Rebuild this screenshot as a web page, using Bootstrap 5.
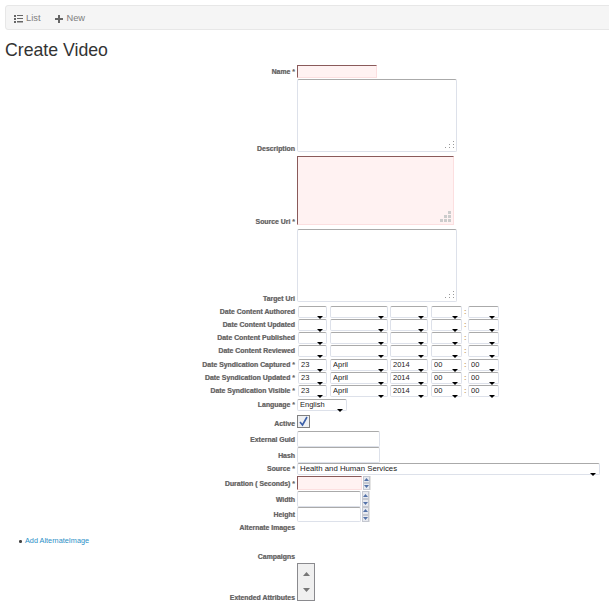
<!DOCTYPE html>
<html lang="en">
<head>
    <meta charset="UTF-8">
    <meta content="width=device-width, initial-scale=1.0" name="viewport">
    <title>Create Video</title>
    <link href="https://cdn.jsdelivr.net/npm/bootstrap@5.3.2/dist/css/bootstrap.min.css" rel="stylesheet">
    <style>
        body {
            font-family: "Liberation Sans", Arial, sans-serif;
            font-size: 8px;
            color: #333;
            padding: 5px 0 0 5px;
            overflow: hidden;
        }

        .top-bar {
            height: 25px;
            margin-right: -4px;
            padding: 2px 0 0 8px;
            gap: 15px;
            background-color: #f5f5f5;
            border: 1px solid #e7e7e7;
            border-radius: 3px;
            font-size: 9.3px;
        }

        .top-bar a {
            color: #808080;
            text-decoration: none;
            gap: 3px;
        }

        .page-title {
            font-size: 17.7px;
            font-weight: 400;
            line-height: 20px;
            margin: 10px 0 5px;
            color: #333;
        }

        /* labels sit on the left, right aligned to x=295 */
        .form-line {
            display: flex;
            align-items: flex-start;
            margin-left: -5px;
        }

        .line-label {
            width: 295px;
            flex: none;
            text-align: right;
            font-weight: 700;
            font-size: 6.9px;
            line-height: 12px;
            color: #666;
            margin: 0;
            text-shadow: 0.4px 0 rgba(190, 130, 60, 0.45), -0.4px 0 rgba(60, 120, 200, 0.45);
        }

        .line-field {
            margin-left: 2px;
            display: flex;
            align-items: flex-start;
            position: relative;
        }

        .at-end { align-items: flex-end; }
        .at-end .line-label { line-height: 6px; }
        .at-mid { align-items: center; }
        .at-mid .line-label { line-height: 9px; }

        .gap-after { margin-top: 4px; }
        .gap-little { margin-top: 1px; }

        .inp {
            display: block;
            padding: 0 3px;
            font-size: 7.5px;
            border: 1px solid #dde1ea;
            border-top-color: #aaa;
            border-radius: 2px;
            background: #fff;
            outline: 0;
        }

        .inp.bad {
            background: #fff2f2;
            border-color: #fcdfe0;
            border-top-color: #8a5a5a;
            border-left-color: #8a5a5a;
            border-radius: 0;
        }

        textarea.inp { resize: none; }

        .size-name { width: 80px; height: 13px; }
        .size-desc { width: 160px; height: 73px; }
        .size-uri { width: 157px; height: 69px; }
        .size-text { width: 83px; height: 16px; }
        .size-dur { width: 65px; height: 14px; }
        .size-num { width: 64px; height: 16px; }
        .size-num-short { width: 64px; height: 15px; }

        .grip {
            position: absolute;
            right: 3px;
            bottom: 3px;
            display: block;
        }

        .grip-big {
            right: 2px;
            bottom: 2px;
        }

        .pick {
            position: relative;
            display: block;
            height: 12px;
        }

        .pick select {
            appearance: none;
            display: block;
            width: 100%;
            height: 12px;
            padding: 0 2px;
            font-size: 7.5px;
            line-height: 10px;
            color: #222;
            border: 1px solid #dde1ea;
            border-top-color: #aaa;
            border-radius: 2px;
            background: #fff;
        }

        .pick::after {
            content: "";
            position: absolute;
            right: 4px;
            bottom: -1px;
            border-top: 3px solid #000;
            border-left: 3.5px solid transparent;
            border-right: 3.5px solid transparent;
        }

        .date-line { height: 13px; }

        .w-day { width: 29px; margin-left: 1px; margin-right: 3px; }
        .w-month { width: 58px; margin-right: 2px; }
        .w-year { width: 38px; margin-right: 3px; }
        .w-hour { width: 31px; }
        .w-min { width: 31px; }
        .w-lang { width: 50px; }
        .w-source { width: 303px; }
        .w-source select { font-size: 7.8px; }

        .time-sep {
            width: 4px;
            margin-left: 2px;
            font-size: 7.5px;
            line-height: 12px;
            color: #c9a26a;
            font-weight: 700;
        }

        .check-box {
            display: flex;
            align-items: center;
            justify-content: center;
            width: 13px;
            height: 13px;
            border: 1px solid #808080;
            background: #eef0f3;
        }

        .spin {
            width: 8px;
            flex: none;
            display: flex;
            flex-direction: column;
            align-self: stretch;
            margin-left: 1px;
            border-right: 1px solid #e4e4e4;
        }

        .spin span {
            flex: 1;
            display: flex;
            align-items: center;
            justify-content: center;
            background: #e8eaf0;
            border: 1px solid #c5c8d0;
        }

        .add-list {
            margin: 4px 0 0;
            padding-left: 20px;
            list-style: none;
            font-size: 7.3px;
            line-height: 10px;
        }

        .add-list li {
            position: relative;
        }

        .add-list li::before {
            content: "";
            position: absolute;
            left: -6px;
            top: 4px;
            width: 2.5px;
            height: 2.5px;
            border-radius: 50%;
            background: #444;
        }

        .add-list a {
            color: #2a8fc7;
            text-decoration: none;
        }

        .multi-box {
            width: 18px;
            height: 38px;
            border: 1px solid #8a8a8e;
            background: #f0f0f0;
            display: flex;
            flex-direction: column;
            align-items: center;
            justify-content: space-between;
            padding: 8px 0 8px;
        }

        .alt-line { margin-top: 1px; }
        .camp-line { margin-top: 6px; }
        .ext-line { margin-top: 2px; }

        .row-16 { height: 16px; }
        .row-13 { height: 13px; }
        .row-15 { height: 15px; }
        .lang-label { line-height: 11px !important; }
        .active-label { line-height: 18px !important; }
        .dur-label { line-height: 15px !important; }
    </style>
</head>
<body>
<nav class="top-bar d-flex align-items-center">
    <a class="d-flex align-items-center" href="#">
        <svg width="9" height="8" viewBox="0 0 9 8"><path d="M0 0h2v2H0zM3 0h6v1H3zM0 3h2v2H0zM3 3h6v1H3zM0 6h2v2H0zM3 6h6v1.5H3z" fill="#666"/></svg>
        List
    </a>
    <a class="d-flex align-items-center" href="#">
        <svg width="8" height="8" viewBox="0 0 8 8"><path d="M3 0h2v3h3v2H5v3H3V5H0V3h3z" fill="#666"/></svg>
        New
    </a>
</nav>
<h1 class="page-title">Create Video</h1>
<form id="videoForm">
    <div class="form-line at-mid"><label class="line-label">Name *</label><div class="line-field"><input class="inp bad size-name"></div></div>
    <div class="form-line at-end gap-little"><label class="line-label">Description</label><div class="line-field"><textarea class="inp size-desc"></textarea><svg class="grip" width="9" height="8"><path d="M8 0h1v1H8zM4 3h1v1H4zM8 3h1v1H8zM0 6h1v1H0zM4 6h1v1H4zM8 6h1v1H8z" fill="#999"/></svg></div></div>
    <div class="form-line at-end gap-after"><label class="line-label">Source Uri *</label><div class="line-field"><textarea class="inp bad size-uri"></textarea><svg class="grip grip-big" width="12" height="12"><path d="M8 0h3v3H8zM4 4h3v3H4zM8 4h3v3H8zM0 8h3v3H0zM4 8h3v3H4zM8 8h3v3H8z" fill="#ccc"/></svg></div></div>
    <div class="form-line at-end gap-after"><label class="line-label">Target Uri</label><div class="line-field"><textarea class="inp size-desc"></textarea><svg class="grip" width="9" height="8"><path d="M8 0h1v1H8zM4 3h1v1H4zM8 3h1v1H8zM0 6h1v1H0zM4 6h1v1H4zM8 6h1v1H8z" fill="#999"/></svg></div></div>
    <div class="gap-after" id="dateRows"></div>
    <div class="form-line gap-little row-16"><label class="line-label lang-label">Language *</label><div class="line-field"><span class="pick w-lang"><select><option>English</option></select></span></div></div>
    <div class="form-line row-16"><label class="line-label active-label">Active</label><div class="line-field"><span class="check-box"><svg width="11" height="11" viewBox="0 0 11 11"><path d="M2 6l2.5 3L9 1" fill="none" stroke="#3b5fa8" stroke-width="1.6"/></svg></span></div></div>
    <div class="form-line at-mid"><label class="line-label">External Guid</label><div class="line-field"><input class="inp size-text"></div></div>
    <div class="form-line at-mid"><label class="line-label">Hash</label><div class="line-field"><input class="inp size-text"></div></div>
    <div class="form-line row-13"><label class="line-label">Source *</label><div class="line-field"><span class="pick w-source"><select><option>Health and Human Services</option></select></span></div></div>
    <div class="form-line row-15"><label class="line-label dur-label">Duration ( Seconds) *</label><div class="line-field"><input class="inp bad size-dur"><span class="spin"><span><svg width="5" height="3"><path d="M0 3l2.5-3L5 3z" fill="#5472a8"/></svg></span><span><svg width="5" height="3"><path d="M0 0l2.5 3L5 0z" fill="#5472a8"/></svg></span></span></div></div>
    <div class="form-line at-mid"><label class="line-label">Width</label><div class="line-field"><input class="inp size-num"><span class="spin"><span><svg width="5" height="3"><path d="M0 3l2.5-3L5 3z" fill="#5472a8"/></svg></span><span><svg width="5" height="3"><path d="M0 0l2.5 3L5 0z" fill="#5472a8"/></svg></span></span></div></div>
    <div class="form-line at-mid"><label class="line-label">Height</label><div class="line-field"><input class="inp size-num-short"><span class="spin"><span><svg width="5" height="3"><path d="M0 3l2.5-3L5 3z" fill="#5472a8"/></svg></span><span><svg width="5" height="3"><path d="M0 0l2.5 3L5 0z" fill="#5472a8"/></svg></span></span></div></div>
    <div class="form-line at-mid alt-line"><label class="line-label">Alternate Images</label></div>
    <ul class="add-list"><li><a href="#">Add AlternateImage</a></li></ul>
    <div class="form-line at-mid camp-line"><label class="line-label">Campaigns</label></div>
    <div class="form-line at-end ext-line"><label class="line-label">Extended Attributes</label><div class="line-field"><div class="multi-box"><svg width="7" height="4"><path d="M0 4l3.5-4L7 4z" fill="#777"/></svg><svg width="7" height="4"><path d="M0 0l3.5 4L7 0z" fill="#777"/></svg></div></div></div>
</form>

<script src="https://cdn.jsdelivr.net/npm/bootstrap@5.3.2/dist/js/bootstrap.bundle.min.js"></script>
<script>
    const dateRows = [
        ['Date Content Authored', false],
        ['Date Content Updated', false],
        ['Date Content Published', false],
        ['Date Content Reviewed', false],
        ['Date Syndication Captured *', true],
        ['Date Syndication Updated *', true],
        ['Date Syndication Visible *', true]
    ];
    const holder = document.getElementById('dateRows');

    function pick(cls, value) {
        return `<span class="pick ${cls}"><select><option>${value}</option></select></span>`;
    }

    dateRows.forEach(([label, filled], i) => {
        const line = document.createElement('div');
        line.className = 'form-line date-line' + (i === 4 ? ' gap-little' : '');
        line.innerHTML = `<label class="line-label">${label}</label><div class="line-field">`
            + pick('w-day', filled ? '23' : '')
            + pick('w-month', filled ? 'April' : '')
            + pick('w-year', filled ? '2014' : '')
            + pick('w-hour', filled ? '00' : '')
            + `<span class="time-sep">:</span>`
            + pick('w-min', filled ? '00' : '')
            + `</div>`;
        holder.appendChild(line);
    });
</script>
</body>
</html>
